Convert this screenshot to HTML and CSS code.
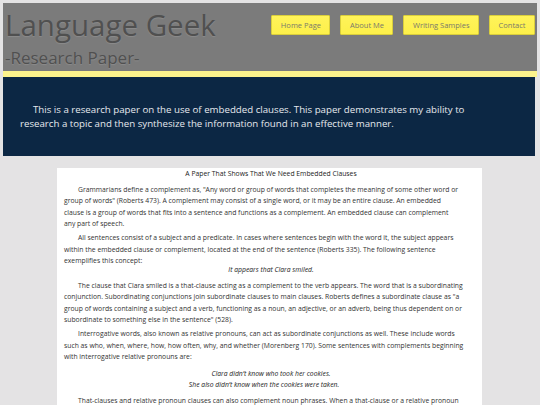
FILE: index.html
```html
<!DOCTYPE html>
<html lang="en">
<head>
<meta charset="utf-8">
<title>Language Geek - Research Paper</title>
<link rel="stylesheet" href="styles.css">
</head>
<body>
<header class="top">
  <div class="brand">
    <h1 class="title">Language Geek</h1>
    <p class="sub">-Research Paper-</p>
  </div>
  <nav class="nav">
    <a class="btn" href="#">Home Page</a>
    <a class="btn" href="#">About Me</a>
    <a class="btn" href="#">Writing Samples</a>
    <a class="btn" href="#">Contact</a>
  </nav>
</header>
<section class="intro">
  <p>This is a research paper on the use of embedded clauses. This paper demonstrates my ability to research a topic and then synthesize the information found in an effective manner.</p>
</section>
<main class="paper">
  <p class="ptitle">A Paper That Shows That We Need Embedded Clauses</p>
  <p>Grammarians define a complement as, "Any word or group of words that completes the meaning of some other word or group of words" (Roberts 473). A complement may consist of a single word, or it may be an entire clause. An embedded clause&nbsp;is a group of words that fits into a sentence and functions as a complement. An embedded clause can complement any&nbsp;part of speech.</p>
  <p>All sentences consist of a subject and a predicate. In cases where sentences begin with the word it, the subject appears within the embedded clause or complement, located at the end of the sentence (Roberts 335). The following sentence exemplifies this concept:</p>
  <p class="ex ex-one">It appears that Clara smiled.</p>
  <p>The clause that Clara smiled is a that-clause acting as a complement to the verb appears. The word that is a subordinating conjunction. Subordinating conjunctions join subordinate clauses to main clauses. Roberts defines a subordinate clause as "a group of words containing a subject and a verb, functioning as a noun, an adjective, or an adverb, being thus dependent on or subordinate to something else in the sentence" (528).</p>
  <p>Interrogative words, also known as relative pronouns, can act as subordinate conjunctions as well. These include words such as who, when, where, how, how often, why, and whether (Morenberg 170). Some sentences with complements beginning with interrogative relative pronouns are:</p>
  <p class="ex ex-two">Clara didn’t know who took her cookies.<br>She also didn’t know when the cookies were taken.</p>
  <p>That-clauses and relative pronoun clauses can also complement noun phrases. When a that-clause or a relative pronoun clause complements a noun phrase, we call it a complex noun phrase complement. The following sentence is an example of a complex noun phrase complement:</p>
</main>
</body>
</html>
```

FILE: styles.css
```css
html, body {
  margin: 0;
  padding: 0;
}
body {
  background: #e4e3e4;
  padding: 3px 3px 0 3px;
  font-family: "Open Sans", "DejaVu Sans", sans-serif;
  overflow: hidden;
}
.top {
  display: flex;
  justify-content: space-between;
  align-items: flex-start;
  background: #7b7b7b;
  border-bottom: 6px solid #fcf38c;
  height: 68px;
  padding: 0 2px 0 2px;
}
.title {
  margin: 4px 0 0 0;
  font-size: 29.5px;
  line-height: 36px;
  font-weight: normal;
  color: #505050;
  text-shadow: 0 1px 1px #8c8c8c;
}
.sub {
  margin: 5px 0 0 0;
  font-size: 17px;
  line-height: 20px;
  color: #505050;
  text-shadow: 0 1px 1px #8c8c8c;
}
.nav {
  display: flex;
  gap: 10px;
  margin-top: 12px;
}
.btn {
  display: block;
  height: 18px;
  line-height: 18px;
  padding: 0 8.5px;
  font-size: 7.5px;
  color: #7a7a6a;
  text-decoration: none;
  background: linear-gradient(#fff35a, #fdf04a);
  border: 1px solid #d9ce3c;
  border-radius: 1px;
}
.intro {
  background: #0c2744;
  margin-right: 2px;
  padding: 26px 50px 25px 17px;
}
.intro p {
  margin: 0;
  font-size: 9.7px;
  line-height: 14px;
  color: #e6e9ee;
  text-indent: 13px;
}
.paper {
  background: #ffffff;
  margin: 12px 0 0 54px;
  width: 400px;
  padding: 0 18px 0 7px;
  color: #333333;
  font-size: 6.8px;
  line-height: 11.4px;
}
.paper p {
  margin: 0 0 2.6px 0;
  text-indent: 14px;
}
.paper .ptitle {
  text-align: center;
  color: #222222;
  margin: 0 0 4.6px 0;
}
.paper .ex {
  text-align: center;
  font-style: italic;
  color: #222222;
}
.paper .ex-one {
  margin: -5.5px 0 5.1px 0;
}
.paper .ex-two {
  margin: 5.6px 0 4.2px 0;
}
```
